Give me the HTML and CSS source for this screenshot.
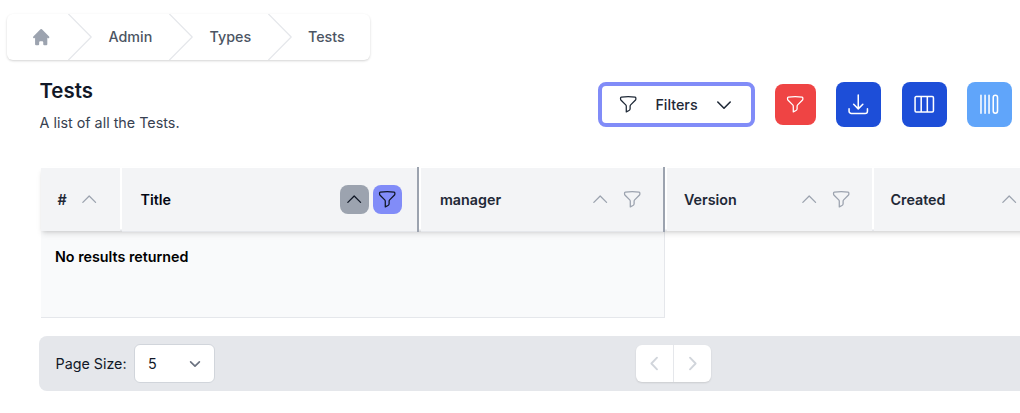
FILE: index.html
```html
<!DOCTYPE html>
<html lang="en">
<head>
<meta charset="utf-8">
<title>Tests</title>
<link rel="stylesheet" href="styles.css">
</head>
<body>
<svg class="defs" width="0" height="0" aria-hidden="true">
  <symbol id="funnel" viewBox="0 0 24 24"><path d="M12 3c2.755 0 5.455.232 8.083.678.533.09.917.556.917 1.096v1.044a2.25 2.25 0 01-.659 1.591l-5.432 5.432a2.25 2.25 0 00-.659 1.591v2.927a2.25 2.25 0 01-1.244 2.013L9.75 21v-6.568a2.25 2.25 0 00-.659-1.591L3.659 7.409A2.25 2.25 0 013 5.818V4.774c0-.54.384-1.006.917-1.096A48.32 48.32 0 0112 3z"/></symbol>
  <symbol id="up" viewBox="0 0 24 24"><path d="M4.5 15.75l7.5-7.5 7.5 7.5"/></symbol>
</svg>
<nav class="crumbs">
  <a class="crumb home"><svg viewBox="0 0 20 20"><path d="M10.707 2.293a1 1 0 00-1.414 0l-7 7a1 1 0 001.414 1.414L4 10.414V17a1 1 0 001 1h2a1 1 0 001-1v-2a1 1 0 011-1h2a1 1 0 011 1v2a1 1 0 001 1h2a1 1 0 001-1v-6.586l.293.293a1 1 0 001.414-1.414l-7-7z"/></svg></a>
  <svg class="sep" viewBox="0 0 24 46"><path d="M.5 0l22.7 23L.5 46"/></svg>
  <a class="crumb admin">Admin</a>
  <svg class="sep" viewBox="0 0 24 46"><path d="M.5 0l22.7 23L.5 46"/></svg>
  <a class="crumb types">Types</a>
  <svg class="sep" viewBox="0 0 24 46"><path d="M.5 0l22.7 23L.5 46"/></svg>
  <a class="crumb">Tests</a>
</nav>
<header class="heading">
  <div class="intro">
    <h1>Tests</h1>
    <p>A list of all the Tests.</p>
  </div>
  <div class="actions">
    <button class="filters"><svg class="icon"><use href="#funnel"/></svg><span>Filters</span><svg class="chev" viewBox="0 0 16 16"><path d="M1.8 5l6.2 6.2L14.2 5"/></svg></button>
    <button class="action red"><svg class="icon"><use href="#funnel"/></svg></button>
    <button class="action blue"><svg class="icon" viewBox="0 0 24 24"><path d="M3 16.5v2.25A2.25 2.25 0 005.25 21h13.5A2.25 2.25 0 0021 18.75V16.5M16.5 12L12 16.5m0 0L7.5 12m4.5 4.5V3"/></svg></button>
    <button class="action blue"><svg class="icon" viewBox="0 0 24 24"><path d="M9 4.5v15m6-15v15m-10.875 0h15.75c.621 0 1.125-.504 1.125-1.125V5.625c0-.621-.504-1.125-1.125-1.125H4.125C3.504 4.5 3 5.004 3 5.625v12.75c0 .621.504 1.125 1.125 1.125z"/></svg></button>
    <button class="action sky"><svg class="icon" viewBox="0 0 24 24"><path d="M3.9 3.2v17.6M7.9 3.2v17.6M11.8 3.2v17.6"/><rect x="15.9" y="3.2" width="4.2" height="17.6" rx="2.1"/></svg></button>
  </div>
</header>
<section class="table">
  <div class="row">
    <div class="cell num"><span>#</span><svg class="small"><use href="#up"/></svg></div>
    <div class="cell title"><span>Title</span><i class="chip gray"><svg class="small"><use href="#up"/></svg></i><i class="chip indigo"><svg class="small"><use href="#funnel"/></svg></i></div>
    <div class="cell manager"><span>manager</span><svg class="small"><use href="#up"/></svg><svg class="small"><use href="#funnel"/></svg></div>
    <div class="cell version"><span>Version</span><svg class="small"><use href="#up"/></svg><svg class="small"><use href="#funnel"/></svg></div>
    <div class="cell created"><span>Created</span><svg class="small"><use href="#up"/></svg></div>
  </div>
  <div class="empty">No results returned</div>
</section>
<footer class="footer">
  <span>Page Size:</span>
  <div class="select"><span>5</span><svg viewBox="0 0 20 20"><path d="M6 8l4 4 4-4"/></svg></div>
  <div class="pager">
    <button><svg viewBox="0 0 20 20"><path d="M12 5.3L7.5 10l4.5 4.7"/></svg></button>
    <button><svg viewBox="0 0 20 20"><path d="M8 5.3l4.5 4.7L8 14.7"/></svg></button>
  </div>
</footer>
</body>
</html>
```
FILE: styles.css
```css
* { box-sizing: border-box; }
body { margin: 0; height: 413px; overflow: hidden; background: #fff; color: #111827; font: 14.3px/20px Inter, sans-serif; }
svg { fill: none; stroke: currentColor; stroke-width: 1.5; stroke-linecap: round; stroke-linejoin: round; flex: none; display: block; }
.defs { position: absolute; }
button { font: inherit; border: 0; padding: 0; display: flex; align-items: center; justify-content: center; }

.crumbs { display: flex; align-items: center; width: 363.5px; height: 46px; margin: 14px 0 0 6.5px; padding-left: 24px; border-radius: 6px; box-shadow: 0 1px 3px rgba(0,0,0,.1), 0 1px 2px rgba(0,0,0,.08); color: #4b5563; font-weight: 450; }
.home { width: 37.5px; color: #9ca3af; }
.home svg { width: 20.4px; height: 20.4px; fill: currentColor; stroke: none; }
.sep { width: 24px; height: 46px; color: #e5e7eb; stroke-width: 1.2; }
.admin, .types { padding-left: 16.5px; width: 76.5px; }
.types { width: 75px; padding-left: 17px; }
.crumb:last-child { padding-left: 16.5px; }

.heading { display: flex; height: 45px; margin: 22px 8px 0 39.5px; justify-content: space-between; }
h1 { margin: -4px 0 0; font-size: 20.4px; line-height: 26px; font-weight: 600; }
.intro p { margin: 9px 0 0; color: #374151; font-size: 14.35px; }
.actions { display: flex; align-items: center; gap: 20.5px; }
.icon { width: 24.5px; height: 24.5px; }
.filters { width: 157px; height: 45px; border: 4px solid #818cf8; border-radius: 8px; background: #fff; color: #1f2937; font-weight: 450; justify-content: flex-start; padding-left: 16.5px; margin-right: -.5px; }
.filters .icon, .red .icon { width: 20.4px; height: 20.4px; }
.filters span { margin-left: 17px; width: 61px; text-align: left; }
.chev { width: 16px; height: 16px; stroke-width: 1.6; }
.action { width: 45px; height: 45px; border-radius: 8px; color: #fff; }
.red { width: 41px; height: 41px; background: #ef4444; }
.blue { background: #1d4ed8; }
.sky { background: #60a5fa; }

.table { margin: 40px 0 0 41px; width: 1000px; }
.row { display: flex; height: 64px; padding-top: 1px; position: relative; box-shadow: 0 4px 6px -1px rgba(0,0,0,.1), 0 2px 4px -2px rgba(0,0,0,.15); background: linear-gradient(#fff 62px, #e5e7eb 63px); }
.cell { display: flex; align-items: center; height: 63px; gap: 12px; padding: 0 20.5px 0 19px; background: #f3f4f6; color: #1f2937; font-weight: 600; margin-right: 2px; }
.cell span { flex: 1; }
.small { width: 20.4px; height: 20.4px; color: #9ca3af; }
.num { width: 79px; padding: 0 21px 0 16.5px; }
.title { width: 297px; color: #030712; gap: 4px; padding-right: 15.5px; }
.title, .manager { border-right: 2px solid #9ca3af; height: 65px; margin-top: -1px; padding-left: 18.5px; background: linear-gradient(#fff 1px, #f3f4f6 1px 64px, #e5e7eb 64px); }
.manager { width: 244px; padding-left: 19px; }
.version { width: 205px; padding-left: 17px; }
.created { width: 160px; padding: 0 15px 0 16.5px; }
.chip { width: 29px; height: 29px; border-radius: 8px; display: flex; align-items: center; justify-content: center; }
.chip .small { color: #111827; }
.gray { background: #9ca3af; }
.indigo { background: #818cf8; }
.empty { width: 624px; height: 87px; padding: 16px 14px; background: #f9fafb; border: solid #e5e7eb; border-width: 0 1px 1px 0; font-weight: 600; color: #000; }

.footer { display: flex; align-items: center; height: 55px; margin: 18px 0 0 39px; padding-left: 16.5px; border-radius: 8px 0 0 8px; background: #e5e7eb; }
.footer > span { width: 78.5px; }
.select { display: flex; align-items: center; justify-content: space-between; width: 81px; height: 39px; padding: 0 8px 0 13px; background: #fff; border: 1px solid #d1d5db; border-radius: 6px; }
.select svg { width: 22px; height: 22px; color: #6b7280; }
.pager { display: flex; margin-left: 421px; width: 75px; height: 37px; border-radius: 6px; background: #fff; box-shadow: 0 1px 2px rgba(0,0,0,.12); }
.pager button { flex: 1; background: none; color: #d1d5db; }
.pager button + button { border-left: 1px solid #e5e7eb; }
.pager svg { width: 25px; height: 25px; }
```
